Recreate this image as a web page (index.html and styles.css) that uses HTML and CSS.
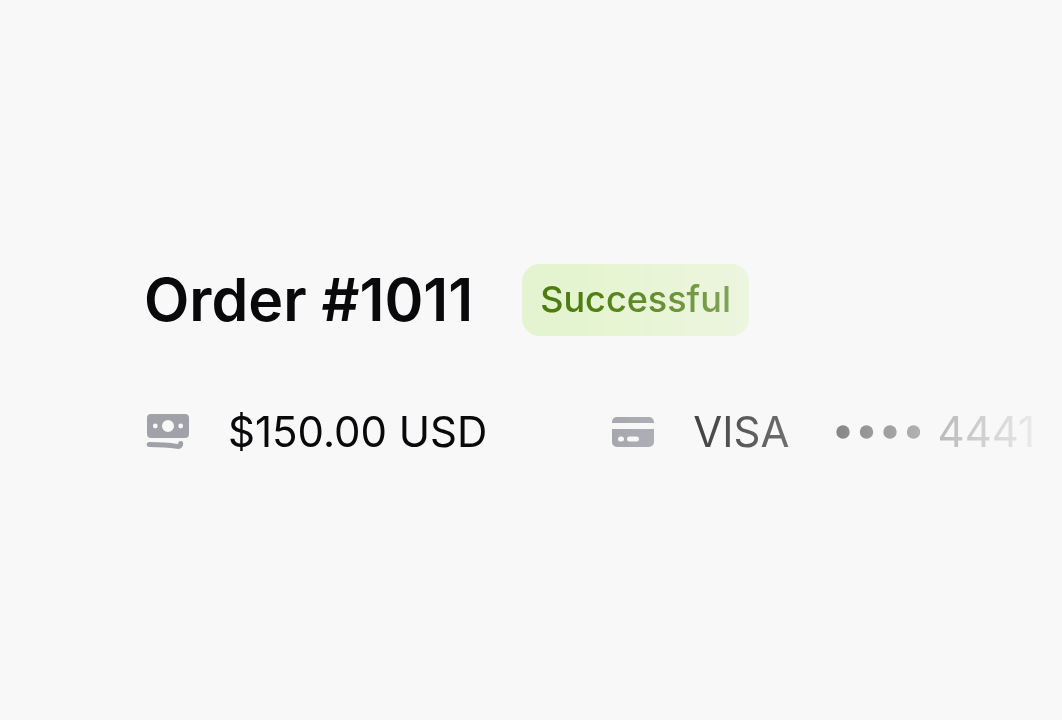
FILE: index.html
```html
<!DOCTYPE html>
<html lang="en">
<head>
    <meta charset="UTF-8">
    <meta name="viewport" content="width=device-width, initial-scale=1.0">
    <title>Order #1011</title>
    <link rel="stylesheet" href="styles.css">
</head>
<body>
    <main class="order">
        <header class="order-header">
            <h1>Order #1011</h1>
            <span class="badge">Successful</span>
        </header>

        <div class="details">
            <div class="detail">
                <svg class="icon" viewBox="0 0 48 48" aria-hidden="true">
                    <path fill-rule="evenodd" d="M7 6h34a4 4 0 0 1 4 4v16a4 4 0 0 1-4 4H7a4 4 0 0 1-4-4V10a4 4 0 0 1 4-4Zm17 6a6 6 0 1 0 0 12a6 6 0 0 0 0-12ZM11.300 15.600a2.400 2.400 0 1 0 0 4.800a2.400 2.400 0 0 0 0-4.800Zm25.400 0a2.400 2.400 0 1 0 0 4.800a2.400 2.400 0 0 0 0-4.800Z"/>
                    <path class="stroke" d="M5.300 36.600C15 36.600 25 37.200 33 38.400C35.500 38.800 36.700 37.800 36.700 35.500"/>
                </svg>
                <span>$150.00 USD</span>
            </div>

            <div class="detail">
                <svg class="icon" viewBox="0 0 48 48" aria-hidden="true">
                    <path d="M3 15v-1a5 5 0 0 1 5-5h32a5 5 0 0 1 5 5v1Z"/>
                    <path fill-rule="evenodd" d="M3 21h42v13a5 5 0 0 1-5 5H8a5 5 0 0 1-5-5Zm8.500 7.500a2.500 2.500 0 0 0 0 5h1a2.500 2.500 0 0 0 0-5Zm9 0a2.500 2.500 0 0 0 0 5h7a2.500 2.500 0 0 0 0-5Z"/>
                </svg>
                <span>VISA</span>
                <span class="card-number">
                    <svg class="dots" viewBox="0 0 84 14" role="img" aria-label="ending in">
                        <circle cx="7" cy="7" r="6.700"/>
                        <circle cx="30.500" cy="7" r="6.700"/>
                        <circle cx="54" cy="7" r="6.700"/>
                        <circle cx="77.500" cy="7" r="6.700"/>
                    </svg>
                    4441
                </span>
            </div>
        </div>
    </main>
</body>
</html>
```

FILE: styles.css
```css
* {
    box-sizing: border-box;
}
body {
    margin: 0;
    min-height: 100vh;
    display: flex;
    align-items: center;
    background: #f8f8f8;
    color: #09090b;
    font-family: Inter, "Liberation Sans", sans-serif;
}
/* content fades out towards the right edge */
.order {
    width: 100%;
    padding: 12px 0 0 144px;
    overflow: hidden;
    white-space: nowrap;
    -webkit-mask-image: linear-gradient(to right, #000 55%, transparent);
    mask-image: linear-gradient(to right, #000 55%, transparent);
}
.order-header {
    display: flex;
    align-items: center;
    gap: 49px;
}
h1 {
    margin: 0;
    font-size: 59px;
    line-height: 72px;
    font-weight: 600;
}
.badge {
    padding: 0 18px 2px;
    border-radius: 18px;
    background: #e5f4d0;
    color: #4d7c0f;
    font-size: 36px;
    line-height: 70px;
    font-weight: 500;
}
.details {
    display: flex;
    gap: 122px;
    margin-top: 60px;
}
.detail {
    display: flex;
    align-items: center;
    gap: 36px;
    font-size: 42px;
    line-height: 72px;
}
.icon {
    width: 48px;
    height: 48px;
    fill: #a1a1aa;
}
.icon .stroke {
    fill: none;
    stroke: #a1a1aa;
    stroke-width: 5;
    stroke-linecap: round;
    stroke-linejoin: round;
}
.card-number {
    display: flex;
    align-items: center;
    gap: 18px;
    padding-left: 10px;
}
.dots {
    width: 84px;
    height: 14px;
    fill: #09090b;
}
```
